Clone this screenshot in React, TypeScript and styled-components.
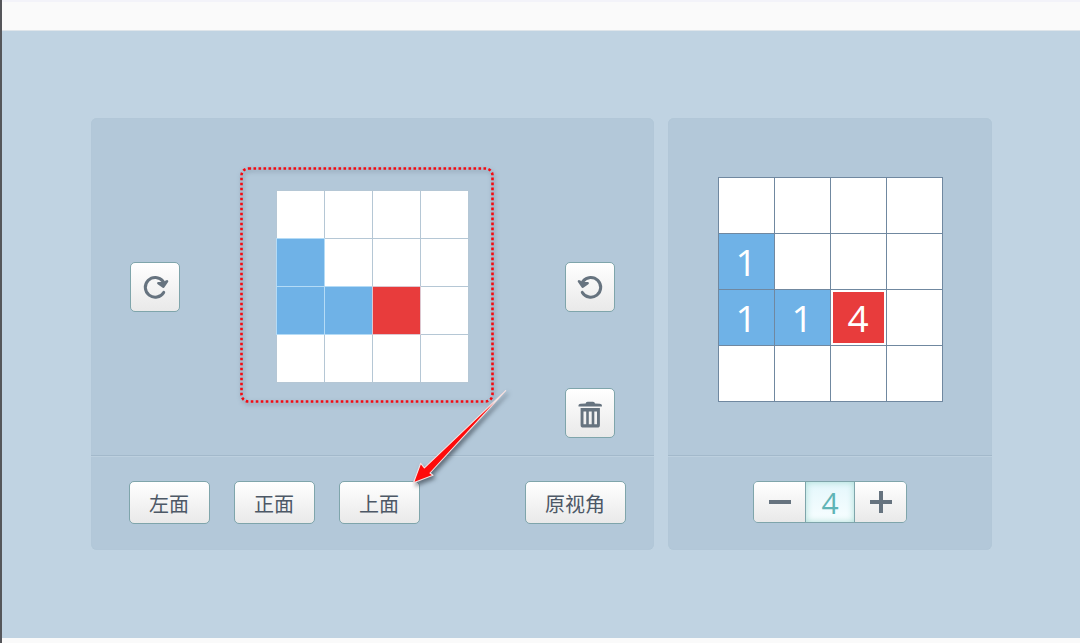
import React, { useState } from "react";
import styled, { createGlobalStyle, css } from "styled-components";

const GlobalStyle = createGlobalStyle`
  *, *::before, *::after { box-sizing: border-box; }
  body {
    margin: 0;
    font-family: "Open Sans", "Noto Sans CJK SC", sans-serif;
    color: #4d5866;
  }
`;

const Page = styled.div`
  min-height: 100vh;
  display: flex;
  flex-direction: column;
  border-left: 2px solid #55565a;
  background: #fafafa;
`;

const TopBar = styled.header`
  height: 31px;
  border-top: 2px solid #f3f3f9;
  border-bottom: 1px solid #dfe5ea;
  background: #fafafa;
`;

const Stage = styled.main`
  flex: 1;
  display: grid;
  grid-template-columns: 563fr 324fr;
  gap: 14px;
  padding: 87px 88px 88px 89px;
  background: #c0d3e2;
`;

const BottomBar = styled.footer`
  height: 5px;
  background: #fafafa;
`;

const Panel = styled.section`
  border-radius: 6px;
  background: #b3c8d9;
  box-shadow: inset 0 0 1px #a9c0d0;
`;

const ViewArea = styled.div`
  height: 337px;
  display: grid;
  grid-template-columns: 50px 1fr 50px;
  align-items: center;
  justify-items: center;
  padding: 17px 39px;
`;

const EditArea = styled.div`
  height: 337px;
  display: flex;
  justify-content: center;
  align-items: flex-start;
  padding-top: 59px;
`;

const SideTools = styled.div`
  align-self: stretch;
  display: grid;
  grid-template-rows: 1fr auto 1fr;

  & > :first-child { grid-row: 2; }
  & > :last-child { grid-row: 3; align-self: end; }
`;

const Toolbar = styled.div<{ $centered?: boolean }>`
  display: flex;
  gap: 24px;
  justify-content: ${(p) => (p.$centered ? "center" : "flex-start")};
  padding: 25px 28px 26px 38px;
  ${(p) => p.$centered && "padding-left: 28px;"}
  border-top: 1px solid #a3b9cb;
  box-shadow: inset 0 1px #bdd0df;
`;

const raised = css`
  border: 1px solid #7fa5ab;
  background: linear-gradient(#ffffff, #e9e9e9);
  color: #4d5866;
  font-family: inherit;
  cursor: pointer;
`;

const IconButton = styled.button`
  ${raised}
  width: 50px;
  height: 50px;
  display: flex;
  align-items: center;
  justify-content: center;
  padding: 0;
  border-radius: 5px;
  color: #66737f;
`;

const TextButton = styled.button`
  ${raised}
  height: 43px;
  padding: 4px 20px 0 19px;
  border-radius: 5px;
  font-size: 20px;
  line-height: 28px;
  white-space: nowrap;
`;

const Anchor = styled.div`
  position: relative;
  display: flex;
`;

const ResetSlot = styled.div`
  display: flex;
  margin-left: auto;
`;

type Kind = "empty" | "block" | "active";

const fills: Record<Kind, string> = {
  empty: "#ffffff",
  block: "#6fb2e7",
  active: "#e83c3c",
};

const ViewBoard = styled.div`
  display: grid;
  grid-template-columns: repeat(4, 47px);
  grid-auto-rows: 47px;
  gap: 1px;
  padding: 1px;
  background: #b5c7d5;
`;

const ViewCell = styled.div<{ $kind: Kind }>`
  background: ${(p) => fills[p.$kind]};
  ${(p) => p.$kind === "block" && "box-shadow: 0 0 0 1px #b4dbf6;"}
  ${(p) => p.$kind === "active" && "box-shadow: 0 0 0 1px #ddc7d0;"}
`;

const EditBoard = styled.div`
  display: grid;
  grid-template-columns: repeat(4, 55px);
  grid-auto-rows: 55px;
  gap: 1px;
  padding: 1px;
  background: #7088a0;
`;

const EditCell = styled.button<{ $kind: Kind }>`
  padding: 0;
  border: ${(p) => (p.$kind === "active" ? "2px solid #ffffff" : "0")};
  background: ${(p) => fills[p.$kind]};
  color: #ffffff;
  font-family: inherit;
  font-size: 37px;
  line-height: 48px;
  cursor: pointer;
`;

const Stepper = styled.div`
  display: flex;
  height: 42px;
  border: 1px solid #7fa5ab;
  border-radius: 5px;
  overflow: hidden;
`;

const StepButton = styled.button`
  ${raised}
  width: 51px;
  display: flex;
  align-items: center;
  justify-content: center;
  padding: 0;
  border: 0;
  color: #66737f;
`;

const StepValue = styled.output`
  width: 50px;
  border: solid #7fa5ab;
  border-width: 0 1px;
  background: linear-gradient(#e4f7fc, #f8feff);
  box-shadow: inset 0 0 7px #a9dcd5;
  color: #5fb4b6;
  font-size: 30px;
  line-height: 41px;
  text-align: center;
`;

const DottedFrame = styled.svg`
  position: absolute;
  left: -40px;
  top: -28px;
  pointer-events: none;
  filter: drop-shadow(1px 2px 2px rgba(50, 65, 85, 0.5));
`;

const Pointer = styled.svg`
  position: absolute;
  left: 67px;
  top: -97px;
  pointer-events: none;
  filter: drop-shadow(2px 3px 2px rgba(50, 60, 70, 0.65));
`;

const RotateIcon = ({ flip }: { flip?: boolean }) => (
  <svg width="28" height="28" viewBox="0 0 28 28" fill="none" aria-hidden="true">
    <g
      transform={flip ? "translate(29 0) scale(-1 1)" : undefined}
      stroke="currentColor"
      strokeLinecap="round"
      strokeLinejoin="round"
    >
      <path d="M22.7 19.4A9.900 9.900 0 1 1 22 8.200" strokeWidth="3" />
      <path d="M17.400 10.200L22.400 13.600L26 8.300L22 10.200Z" fill="currentColor" strokeWidth="2.600" />
    </g>
  </svg>
);

const TrashIcon = () => (
  <svg width="28" height="32" viewBox="0 0 28 32" aria-hidden="true">
    <path
      fill="currentColor"
      d="M9.600 6.500Q9.800 4.700 11.600 4.700H17Q18.800 4.700 19 6.500L23.800 6.800Q25.900 7 25.900 8.300V9.400H2.500V8.300Q2.500 7 4.600 6.800Z"
    />
    <path
      fill="currentColor"
      fillRule="evenodd"
      d="M4.600 11H23.900V28Q23.900 30.600 21.300 30.600H7.200Q4.600 30.600 4.600 28ZM7.500 14.600V27.300H10.200V14.600ZM12.800 14.600V27.300H15.700V14.600ZM18.300 14.600V27.300H21V14.600Z"
    />
  </svg>
);

const heights = [
  [0, 0, 0, 0],
  [1, 0, 0, 0],
  [1, 1, 4, 0],
  [0, 0, 0, 0],
];

const SELECTED_ROW = 2;
const SELECTED_COLUMN = 2;

export default function App() {
  const [count, setCount] = useState(4);

  const cells = heights.flatMap((row, r) =>
    row.map((h, c) => {
      const active = r === SELECTED_ROW && c === SELECTED_COLUMN;
      const kind: Kind = active ? "active" : h > 0 ? "block" : "empty";
      return { id: `${r}-${c}`, r, c, kind, value: active ? count : h };
    })
  );

  return (
    <>
      <GlobalStyle />
      <Page>
        <TopBar />
        <Stage>
          <Panel>
            <ViewArea>
              <IconButton aria-label="顺时针旋转">
                <RotateIcon />
              </IconButton>
              <Anchor>
                <ViewBoard>
                  {cells.map((cell) => (
                    <ViewCell key={cell.id} $kind={cell.kind} />
                  ))}
                </ViewBoard>
                <DottedFrame width="264" height="246" viewBox="0 0 264 246" aria-hidden="true">
                  <rect
                    x="5.500"
                    y="6.500"
                    width="251"
                    height="233"
                    rx="7"
                    fill="none"
                    stroke="#f50a12"
                    strokeWidth="2.600"
                    strokeDasharray="2.600 2.400"
                  />
                </DottedFrame>
              </Anchor>
              <SideTools>
                <IconButton aria-label="逆时针旋转">
                  <RotateIcon flip />
                </IconButton>
                <IconButton aria-label="清空">
                  <TrashIcon />
                </IconButton>
              </SideTools>
            </ViewArea>
            <Toolbar>
              <TextButton>左面</TextButton>
              <TextButton>正面</TextButton>
              <Anchor>
                <TextButton>上面</TextButton>
                <Pointer width="110" height="112" viewBox="0 0 110 112" aria-hidden="true">
                  <path
                    d="M7.500 98.700L14.700 79.300L18.400 83.800L99.700 6.700L24 89L27 91.300Z"
                    fill="#ff0a0a"
                    stroke="#f3e3e3"
                    strokeWidth="1.100"
                    strokeLinejoin="round"
                  />
                </Pointer>
              </Anchor>
              <ResetSlot>
                <TextButton>原视角</TextButton>
              </ResetSlot>
            </Toolbar>
          </Panel>

          <Panel>
            <EditArea>
              <EditBoard>
                {cells.map((cell) => (
                  <EditCell
                    key={cell.id}
                    $kind={cell.kind}
                    aria-label={`第${cell.r + 1}行第${cell.c + 1}列：${cell.value}`}
                  >
                    {cell.value || null}
                  </EditCell>
                ))}
              </EditBoard>
            </EditArea>
            <Toolbar $centered>
              <Stepper>
                <StepButton aria-label="减少" onClick={() => setCount((n) => Math.max(1, n - 1))}>
                  <svg width="24" height="24" viewBox="0 0 24 24" aria-hidden="true">
                    <path d="M1 12H23" stroke="currentColor" strokeWidth="4" />
                  </svg>
                </StepButton>
                <StepValue>{count}</StepValue>
                <StepButton aria-label="增加" onClick={() => setCount((n) => Math.min(9, n + 1))}>
                  <svg width="24" height="24" viewBox="0 0 24 24" aria-hidden="true">
                    <path d="M1 12H23M12 1V23" stroke="currentColor" strokeWidth="4" />
                  </svg>
                </StepButton>
              </Stepper>
            </Toolbar>
          </Panel>
        </Stage>
        <BottomBar />
      </Page>
    </>
  );
}
